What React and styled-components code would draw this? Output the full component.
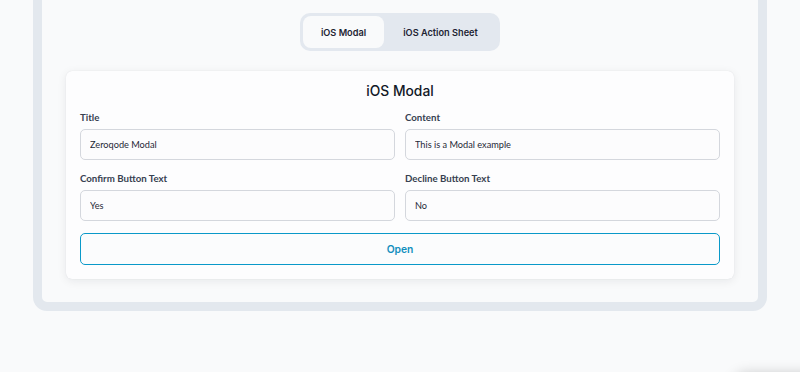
import React, { useState } from "react";
import styled, { createGlobalStyle } from "styled-components";

const Global = createGlobalStyle`
  html, body { margin: 0; padding: 0; background: #f9fafb; overflow: hidden; }
  body { width: 800px; height: 372px; font-family: "Inter", "Liberation Sans", sans-serif; }
  * { box-sizing: border-box; }
`;

const Page = styled.div`
  padding: 0 33px;
`;

const Frame = styled.div`
  margin-top: -20px;
  border: 9px solid #e3e8ee;
  border-radius: 0 0 14px 14px;
  background: #f9fafb;
  padding: 24px 24px 23px;
  display: flex;
  flex-direction: column;
  align-items: center;
  gap: 20px;
`;

const Tabs = styled.div`
  display: flex;
  padding: 3px;
  background: #e3e8ef;
  border-radius: 10px;
  width: 200px;
  height: 38px;
`;

const Tab = styled.button`
  border: none;
  border-radius: 8px;
  background: ${(p) => (p.$active ? "#f9fafb" : "transparent")};
  width: ${(p) => p.$w}px;
  height: 32px;
  font-family: "Inter", sans-serif;
  font-weight: 600;
  font-size: 9.2px;
  color: #1e2433;
  padding: 0;
  cursor: pointer;
`;

const Card = styled.div`
  align-self: stretch;
  background: #fdfdfe;
  border-radius: 6px;
  box-shadow: 0 2px 10px rgba(15, 23, 42, 0.08), 0 0 1px rgba(15, 23, 42, 0.12);
  padding: 10px 14px 14px;
  display: flex;
  flex-direction: column;
  gap: 10px;
`;

const Heading = styled.h2`
  margin: 0;
  text-align: center;
  font-family: "Inter", sans-serif;
  font-weight: 500;
  font-size: 13.8px;
  line-height: 20px;
  color: #111827;
`;

const Grid = styled.div`
  display: grid;
  grid-template-columns: 1fr 1fr;
  column-gap: 10px;
  row-gap: 12px;
`;

const Field = styled.label`
  display: flex;
  flex-direction: column;
  gap: 5px;
`;

const Label = styled.span`
  font-family: "Lato", sans-serif;
  font-weight: 700;
  font-size: 9.7px;
  line-height: 13px;
  color: #374151;
`;

const Input = styled.input`
  height: 31px;
  border: 1px solid #d4d7dd;
  border-radius: 5px;
  background: #fcfcfd;
  padding: 0 9px;
  font-family: "Lato", sans-serif;
  font-size: 9.2px;
  color: #1f2937;
  outline: none;
`;

const OpenButton = styled.button`
  margin-top: 2px;
  height: 32px;
  border: 1.5px solid #0a99c9;
  border-radius: 5px;
  background: #fbfcfd;
  font-family: "Inter", sans-serif;
  font-weight: 600;
  font-size: 10.3px;
  color: #128fbd;
  cursor: pointer;
`;

const Shade = styled.div`
  position: fixed;
  left: 738px;
  top: 378px;
  width: 120px;
  height: 40px;
  border-radius: 8px;
  background: #fff;
  box-shadow: 0 0 14px 4px rgba(0, 0, 0, 0.22);
`;

const fields = [
  { label: "Title", value: "Zeroqode Modal" },
  { label: "Content", value: "This is a Modal example" },
  { label: "Confirm Button Text", value: "Yes" },
  { label: "Decline Button Text", value: "No" },
];

export default function App() {
  const [tab, setTab] = useState(0);
  return (
    <>
      <Global />
      <Page>
        <Frame>
          <Tabs>
            <Tab $active={tab === 0} $w={81} onClick={() => setTab(0)}>
              iOS Modal
            </Tab>
            <Tab $active={tab === 1} $w={113} onClick={() => setTab(1)}>
              iOS Action Sheet
            </Tab>
          </Tabs>
          <Card>
            <Heading>iOS Modal</Heading>
            <Grid>
              {fields.map((f) => (
                <Field key={f.label}>
                  <Label>{f.label}</Label>
                  <Input defaultValue={f.value} />
                </Field>
              ))}
            </Grid>
            <OpenButton>Open</OpenButton>
          </Card>
        </Frame>
      </Page>
      <Shade />
    </>
  );
}
